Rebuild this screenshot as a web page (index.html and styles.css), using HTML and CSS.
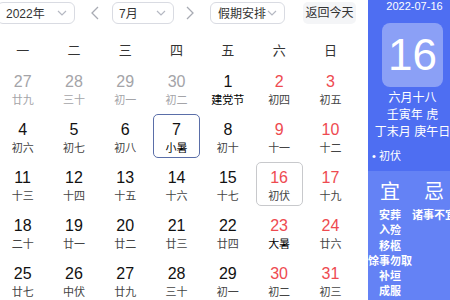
FILE: index.html
```html
<!DOCTYPE html>
<html lang="zh">

<head>
    <meta charset="UTF-8">
    <title>万年历</title>
    <link rel="stylesheet" href="styles.css">
</head>

<body>
    <div class="cal">
        <div class="main">
            <div class="bar">
                <div class="sel sel-year"><span>2022年</span>
                    <svg class="chev" width="10" height="6" viewBox="0 0 10 6"><path d="M1 1l4 4 4-4" fill="none" stroke="#b5b8c2" stroke-width="1.2"/></svg>
                </div>
                <svg class="arrow prev" width="8" height="14" viewBox="0 0 8 14"><path d="M7 1L1 7l6 6" fill="none" stroke="#a8abb3" stroke-width="1.3"/></svg>
                <div class="sel sel-month"><span>7月</span>
                    <svg class="chev" width="10" height="6" viewBox="0 0 10 6"><path d="M1 1l4 4 4-4" fill="none" stroke="#b5b8c2" stroke-width="1.2"/></svg>
                </div>
                <svg class="arrow next" width="8" height="14" viewBox="0 0 8 14"><path d="M1 1l6 6-6 6" fill="none" stroke="#a8abb3" stroke-width="1.3"/></svg>
                <div class="sel sel-holiday"><span>假期安排</span>
                    <svg class="chev" width="10" height="6" viewBox="0 0 10 6"><path d="M1 1l4 4 4-4" fill="none" stroke="#b5b8c2" stroke-width="1.2"/></svg>
                </div>
                <div class="today-btn">返回今天</div>
            </div>

            <div class="week">
                <span>一</span><span>二</span><span>三</span><span>四</span><span>五</span><span>六</span><span>日</span>
            </div>

            <div class="days">
                <div class="day other"><b>27</b><i>廿九</i></div>
                <div class="day other"><b>28</b><i>三十</i></div>
                <div class="day other"><b>29</b><i>初一</i></div>
                <div class="day other"><b>30</b><i>初二</i></div>
                <div class="day"><b>1</b><i class="fest">建党节</i></div>
                <div class="day rest"><b>2</b><i>初四</i></div>
                <div class="day rest"><b>3</b><i>初五</i></div>

                <div class="day"><b>4</b><i>初六</i></div>
                <div class="day"><b>5</b><i>初七</i></div>
                <div class="day"><b>6</b><i>初八</i></div>
                <div class="day picked"><b>7</b><i class="fest">小暑</i></div>
                <div class="day"><b>8</b><i>初十</i></div>
                <div class="day rest"><b>9</b><i>十一</i></div>
                <div class="day rest"><b>10</b><i>十二</i></div>

                <div class="day"><b>11</b><i>十三</i></div>
                <div class="day"><b>12</b><i>十四</i></div>
                <div class="day"><b>13</b><i>十五</i></div>
                <div class="day"><b>14</b><i>十六</i></div>
                <div class="day"><b>15</b><i>十七</i></div>
                <div class="day rest today"><b>16</b><i>初伏</i></div>
                <div class="day rest"><b>17</b><i>十九</i></div>

                <div class="day"><b>18</b><i>二十</i></div>
                <div class="day"><b>19</b><i>廿一</i></div>
                <div class="day"><b>20</b><i>廿二</i></div>
                <div class="day"><b>21</b><i>廿三</i></div>
                <div class="day"><b>22</b><i>廿四</i></div>
                <div class="day rest"><b>23</b><i class="fest">大暑</i></div>
                <div class="day rest"><b>24</b><i>廿六</i></div>

                <div class="day"><b>25</b><i>廿七</i></div>
                <div class="day"><b>26</b><i>中伏</i></div>
                <div class="day"><b>27</b><i>廿九</i></div>
                <div class="day"><b>28</b><i>三十</i></div>
                <div class="day"><b>29</b><i>初一</i></div>
                <div class="day rest"><b>30</b><i>初二</i></div>
                <div class="day rest"><b>31</b><i>初三</i></div>
            </div>
        </div>

        <div class="side">
            <div class="side-top">
                <div class="side-date">2022-07-16</div>
                <div class="big-day">16</div>
                <div class="lunar first">六月十八</div>
                <div class="lunar">壬寅年 虎</div>
                <div class="lunar">丁末月 庚午日</div>
                <div class="term">• 初伏</div>
            </div>
            <div class="side-bottom">
                <div class="col">
                    <div class="col-title">宜</div>
                    <div class="item">安葬</div>
                    <div class="item">入殓</div>
                    <div class="item">移柩</div>
                    <div class="item">馀事勿取</div>
                    <div class="item">补垣</div>
                    <div class="item">成服</div>
                </div>
                <div class="col">
                    <div class="col-title">忌</div>
                    <div class="item">诸事不宜</div>
                </div>
            </div>
        </div>
    </div>
</body>

</html>
```

FILE: styles.css
```css
* {
    margin: 0;
    padding: 0;
    box-sizing: border-box;
}

body {
    width: 450px;
    height: 300px;
    overflow: hidden;
    background: #fff;
    font-family: "Liberation Sans", "Noto Sans CJK SC", sans-serif;
    color: #222;
}

.cal {
    display: flex;
    width: 460px;
    margin-left: -3px;
}

.main {
    width: 371px;
}

/* 顶部工具条 */
.bar {
    display: flex;
    align-items: center;
    height: 24px;
    padding-top: 1px;
}

.sel {
    display: flex;
    align-items: center;
    justify-content: space-between;
    height: 22px;
    border: 1px solid #d9dbe2;
    border-radius: 6px;
    font-size: 12px;
    color: #333;
    padding: 0 7px 0 8px;
}

.sel-year {
    width: 78px;
}

.sel-month {
    width: 62px;
    padding-left: 6px;
}

.sel-holiday {
    width: 75px;
    padding-left: 7px;
}

.arrow.prev {
    margin: 0 13px 0 16px;
}

.arrow.next {
    margin: 0 16px 0 12px;
}

.today-btn {
    margin-left: 18px;
    width: 53px;
    height: 22px;
    line-height: 22px;
    text-align: center;
    border-radius: 5px;
    background: #f4f5f7;
    font-size: 12px;
    color: #333;
}

/* 星期 */
.week {
    display: grid;
    grid-template-columns: repeat(7, 51.3px);
    margin-top: 13px;
    height: 28px;
    line-height: 28px;
    font-size: 13px;
    color: #333;
    text-align: center;
}

.days {
    display: grid;
    grid-template-columns: repeat(7, 51.3px);
    grid-auto-rows: 44px;
    row-gap: 4px;
    margin-top: 1px;
}

.day {
    width: 47px;
    justify-self: center;
    text-align: center;
    border: 1px solid transparent;
    border-radius: 5px;
    padding-top: 5px;
}

.day b {
    display: block;
    font-weight: normal;
    font-size: 16px;
    line-height: 20px;
    color: #111;
}

.day i {
    display: block;
    font-style: normal;
    font-size: 11px;
    line-height: 14px;
    margin-top: 1px;
    color: #444;
}

.day i.fest {
    color: #000;
}

.day.other b,
.day.other i {
    color: #a4a4a8;
}

.day.rest b {
    color: #ee4a50;
}

.day.picked {
    border-color: #5a6ea8;
}

.day.today {
    border-color: #c8c9cc;
}

/* 右侧面板 */
.side {
    width: 89px;
    background: #4e6ef2;
    color: #fff;
    height: 300px;
}

.side-top {
    padding: 0 4px;
    height: 171px;
    text-align: center;
}

.side-date {
    font-size: 11px;
    line-height: 12px;
    margin-left: 4px;
}

.big-day {
    width: 61px;
    height: 64px;
    margin: 11px 0 0 10px;
    border-radius: 8px;
    background: rgba(255, 255, 255, 0.35);
    font-size: 44px;
    line-height: 64px;
}

.lunar {
    font-size: 12px;
    line-height: 17px;
}

.lunar.first {
    margin-top: 3px;
}

.term {
    text-align: left;
    font-size: 11px;
    line-height: 14px;
    margin-top: 8px;
}

.side-bottom {
    display: flex;
    height: 129px;
    background: #6482f5;
    padding-top: 8px;
}

.col {
    width: 44px;
    text-align: center;
}

.col-title {
    font-size: 20px;
    line-height: 26px;
    margin-bottom: 3px;
}

.item {
    font-size: 11px;
    line-height: 15.3px;
    font-weight: bold;
    white-space: nowrap;
}
```
